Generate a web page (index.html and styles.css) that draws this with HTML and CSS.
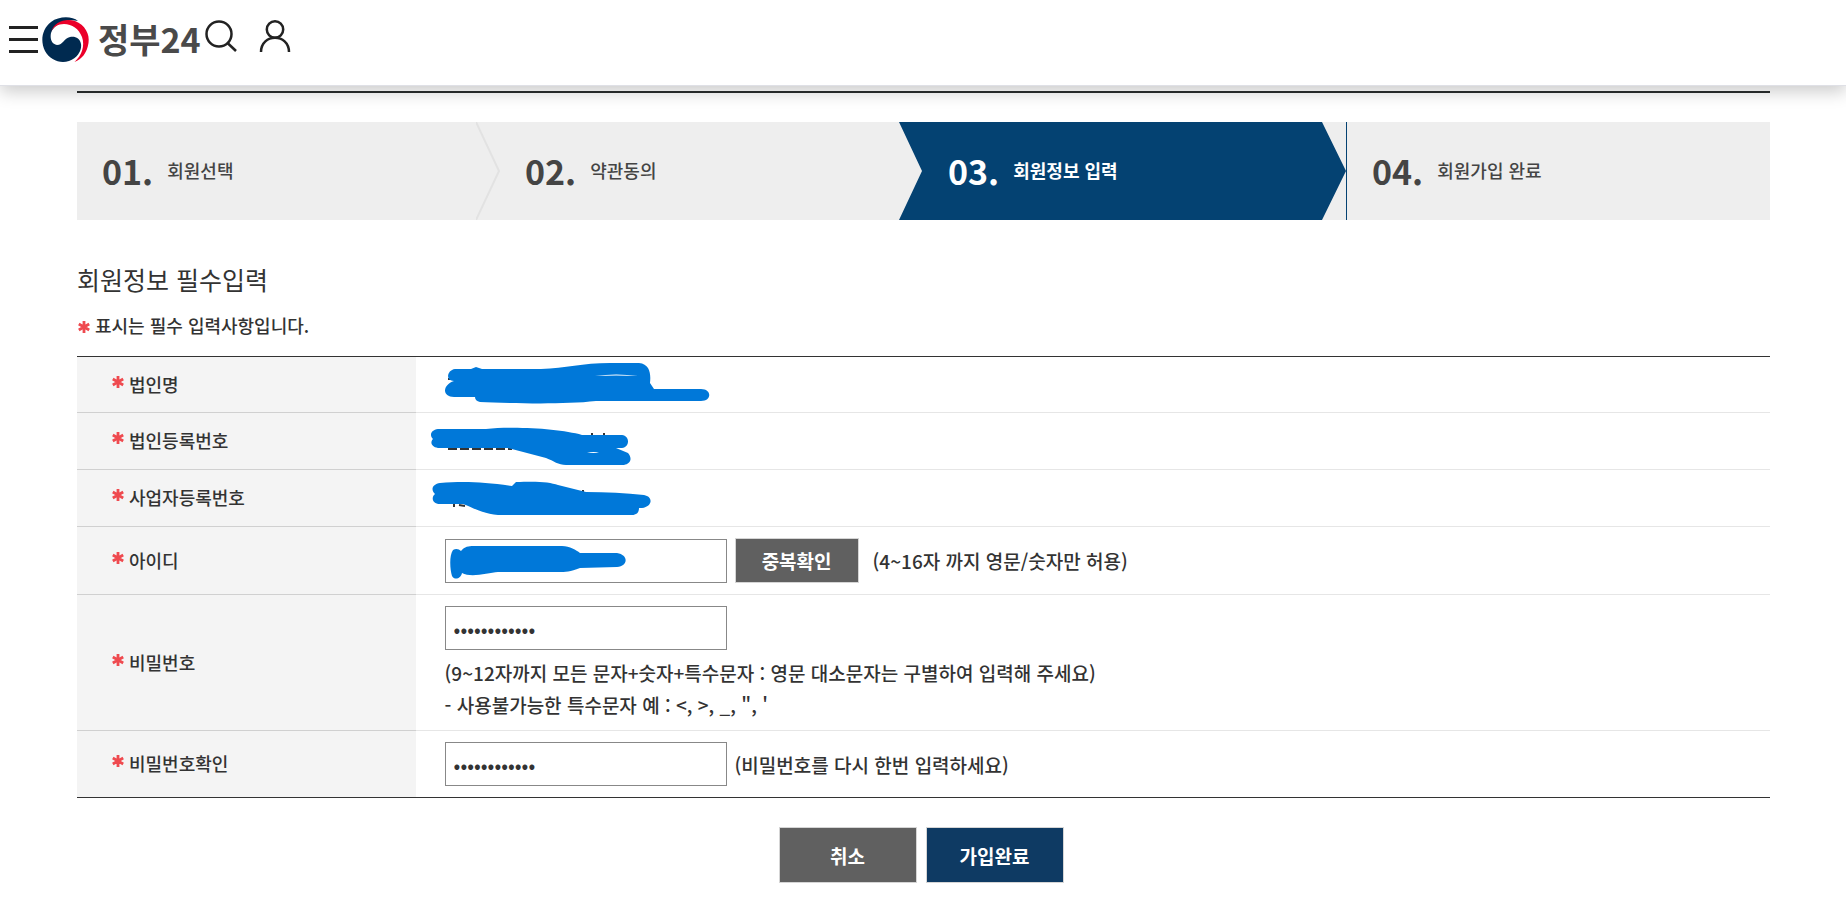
FILE: index.html
```html
<!DOCTYPE html>
<html lang="ko">
<head>
    <meta charset="UTF-8">
    <meta name="viewport" content="width=device-width, initial-scale=1.0">
    <title>회원정보 입력 | 정부24</title>
    <link rel="stylesheet" href="styles.css">
</head>
<body>
    <svg class="symbols" aria-hidden="true">
        <symbol id="star" viewBox="0 0 12 12">
            <path d="M6 0v12M0.800 3l10.400 6M11.200 3L0.800 9" fill="none" stroke="#ef4a4f" stroke-width="2.800"/>
        </symbol>
    </svg>

    <header class="header">
        <button type="button" class="icon-button" aria-label="전체메뉴">
            <svg width="29" height="28" viewBox="0 0 29 28"><path d="M0 1.5h29M0 13.5h29M0 25.5h29" stroke="#222" stroke-width="3"/></svg>
        </button>
        <a href="#" class="logo">
            <svg width="48" height="46" viewBox="0 0 48 46">
                <path d="M36 4C30-1 17-1 9 5C0 12-2 24 3 34C8 43 18 47 27 44C36 41 40 33 39 27C38 21 33 19 28 20C22 21 21 28 15 28C9 27 8 21 9 16C12 7 24 1 36 4Z" fill="#002a50"/>
                <path d="M9 15C12 5 23 1 33 4C43 8 48 17 46.500 26C45 36 40 42 32.500 45C40 38 43 29 40 20C37 12 30 7 22 7C16 7 11 10 9 15Z" fill="#eb0029"/>
            </svg>
            <span>정부24</span>
        </a>
        <button type="button" class="icon-button tool" aria-label="검색">
            <svg width="32" height="32" viewBox="0 0 32 32" fill="none" stroke="#222" stroke-width="2.500"><circle cx="14" cy="14" r="12.500"/><path d="M22.500 23L31 31"/></svg>
        </button>
        <button type="button" class="icon-button tool" aria-label="로그인">
            <svg width="32" height="32" viewBox="0 0 32 32" fill="none" stroke="#222" stroke-width="2.500"><circle cx="16" cy="9.500" r="8.200"/><path d="M2 32C2 13 30 13 30 32"/></svg>
        </button>
    </header>

    <main class="container">
        <ol class="steps">
            <li class="step">
                <strong>01.</strong><span>회원선택</span>
                <svg class="arrow" viewBox="0 0 24 98" preserveAspectRatio="none"><path d="M0 0L23 49L0 98" fill="none" stroke="#e2e2e2" stroke-width="2"/></svg>
            </li>
            <li class="step">
                <strong>02.</strong><span>약관동의</span>
                <svg class="arrow" viewBox="0 0 24 98" preserveAspectRatio="none"><path d="M0 0H24V98H0L23 49Z" fill="#044272"/></svg>
            </li>
            <li class="step on">
                <strong>03.</strong><span>회원정보 입력</span>
                <svg class="arrow" viewBox="0 0 24 98" preserveAspectRatio="none"><path d="M0 0H24V98H0L24 49Z" fill="#eee"/></svg>
            </li>
            <li class="step">
                <strong>04.</strong><span>회원가입 완료</span>
            </li>
        </ol>

        <h1>회원정보 필수입력</h1>
        <p class="notice"><svg class="star"><use href="#star"/></svg>표시는 필수 입력사항입니다.</p>

        <form>
            <table class="form-table">
                <tbody>
                    <tr>
                        <th scope="row"><svg class="star"><use href="#star"/></svg>법인명</th>
                        <td>
                            <svg class="mask" width="320" height="56" viewBox="0 0 320 56">
                                <path d="M32 22h6M176 20h3M194 19h2" stroke="#333" stroke-width="2"/>
                                <path d="M39 12H55L60 10L66 12H125C150 11 166 6 194 6H223C234 7 235 17 234 26L238 32L243 32H285C296 32 296 44 285 44H180C145 48 90 46 64 45Q59 44 59 40H38C26 40 26 28 38 24C29 24 31 13 39 12Z" fill="#0078d9"/>
                                <path d="M179 19Q200 16 222 19Q200 18 179 19" fill="#fff"/>
                            </svg>
                        </td>
                    </tr>
                    <tr>
                        <th scope="row"><svg class="star"><use href="#star"/></svg>법인등록번호</th>
                        <td>
                            <svg class="mask" width="320" height="56" viewBox="0 0 320 56">
                                <path d="M32 36h64" stroke="#333" stroke-width="2" stroke-dasharray="9 3"/>
                                <path d="M176 20v4M188 20v4" stroke="#333" stroke-width="2"/>
                                <path d="M22 16H70C100 13 145 16 166 22H206C214 23 214 34 206 35H200L212 40C217 46 214 51 208 52H150C142 52 138 48 130 45L92 35H22C15 34 14 29 17 26C13 22 15 17 22 16Z" fill="#0078d9"/>
                                <path d="M171 40Q178 38 183 40Z" fill="#fff"/>
                            </svg>
                        </td>
                    </tr>
                    <tr>
                        <th scope="row"><svg class="star"><use href="#star"/></svg>사업자등록번호</th>
                        <td>
                            <svg class="mask" width="320" height="56" viewBox="0 0 320 56">
                                <path d="M38 32v5M43 35l6 1M167 20v4" stroke="#333" stroke-width="2"/>
                                <path d="M24 13C48 11 68 12 96 16L100 12C122 11 134 12 142 15L170 22C190 22 210 23 228 25C238 27 236 37 226 38H223C223 43 220 45 216 45H90C70 46 58 38 47 34H24C16 34 15 27 19 24C14 19 17 14 24 13Z" fill="#0078d9"/>
                            </svg>
                        </td>
                    </tr>
                    <tr>
                        <th scope="row"><svg class="star"><use href="#star"/></svg><label for="user-id">아이디</label></th>
                        <td>
                            <div class="field">
                                <input type="text" id="user-id">
                                <button type="button" class="btn-check">중복확인</button>
                                <span>(4~16자 까지 영문/숫자만 허용)</span>
                            </div>
                            <svg class="mask" width="320" height="67" viewBox="0 0 320 67">
                                <path d="M37 23C40 21 43 22 45 24C50 18 55 19 63 19H146C154 19 160 23 164 26H201C213 28 212 39 201 40L164 41C154 45 150 45 142 45H82C72 46 55 51 46 46C45 51 39 54 36 49C34 42 33 29 37 23Z" fill="#0078d9"/>
                            </svg>
                        </td>
                    </tr>
                    <tr>
                        <th scope="row"><svg class="star"><use href="#star"/></svg><label for="user-pw">비밀번호</label></th>
                        <td>
                            <div class="field">
                                <input type="password" id="user-pw" value="abcdefgh1234">
                            </div>
                            <p class="guide">(9~12자까지 모든 문자+숫자+특수문자 : 영문 대소문자는 구별하여 입력해 주세요)<br>- 사용불가능한 특수문자 예 : &lt;, &gt;, _, ", '</p>
                        </td>
                    </tr>
                    <tr>
                        <th scope="row"><svg class="star"><use href="#star"/></svg><label for="user-pw2">비밀번호확인</label></th>
                        <td>
                            <div class="field">
                                <input type="password" id="user-pw2" value="abcdefgh1234">
                                <span>(비밀번호를 다시 한번 입력하세요)</span>
                            </div>
                        </td>
                    </tr>
                </tbody>
            </table>
            <div class="buttons">
                <button type="button" class="btn-cancel">취소</button>
                <button type="submit" class="btn-submit">가입완료</button>
            </div>
        </form>
    </main>
</body>
</html>
```
FILE: styles.css
```css
* {
    box-sizing: border-box;
}
body {
    margin: 0;
    font-family: "Noto Sans CJK KR", "Noto Sans", sans-serif;
    font-size: 18px;
    font-weight: 500;
    color: #333;
    background: #fff;
}
.symbols {
    display: none;
}
button, input {
    font-family: inherit;
    color: inherit;
}
button {
    cursor: pointer;
}

/* header */
.header {
    position: relative;
    display: flex;
    align-items: center;
    height: 86px;
    padding: 0 9px 5px;
    border-bottom: 1px solid #dfe0e6;
    box-shadow: 0 6px 16px rgba(0, 0, 0, 0.2);
}
.icon-button {
    display: flex;
    padding: 0;
    border: none;
    background: none;
}
.icon-button.tool {
    margin: 0 22px 8px 0;
}
.logo {
    display: flex;
    align-items: center;
    gap: 8px;
    margin: 0 4px;
    font-size: 34px;
    font-weight: 700;
    line-height: 46px;
    color: #4a4a4a;
    text-decoration: none;
}
.logo span {
    padding-bottom: 2px;
}

.container {
    margin: 5px 76px 0 77px;
    border-top: 2px solid #2b2e2e;
}

/* steps */
.steps {
    display: flex;
    margin: 29px 0 0;
    padding: 0;
    list-style: none;
}
.step {
    position: relative;
    flex: 1;
    display: flex;
    align-items: center;
    gap: 14px;
    height: 98px;
    padding: 0 0 2px 25px;
    background: #eee;
    color: #444;
}
.step strong {
    font-size: 34px;
    font-weight: 700;
}
.step.on {
    background: #044272;
    border-right: 1px solid #044272;
    color: #fff;
    font-weight: 700;
}
.arrow {
    position: absolute;
    top: 0;
    right: 0;
    width: 24px;
    height: 100%;
}

h1 {
    margin: 41px 0 0;
    font-size: 25px;
    font-weight: 400;
    line-height: 36px;
}
.notice {
    margin: 13px 0 16px;
    line-height: 30px;
}
.star {
    width: 12px;
    height: 12px;
    margin: 0 5px 0 1px;
}

/* form table */
.form-table {
    width: 100%;
    border-collapse: separate;
    border-spacing: 0;
}
.form-table th {
    width: 20%;
    padding: 0 0 2px 34px;
    background: #f4f4f4;
    border-bottom: 1px solid #d0d0d0;
    font-weight: 500;
    text-align: left;
}
.form-table th .star {
    vertical-align: 4px;
}
.form-table td {
    position: relative;
    height: 57px;
    padding: 11px 0 11px 29px;
    border-bottom: 1px solid #e6e6e6;
}
.form-table tr:first-child th,
.form-table tr:first-child td {
    border-top: 1px solid #333;
}
.form-table tr:last-child th,
.form-table tr:last-child td {
    border-bottom-color: #333;
}
.field {
    display: flex;
    align-items: center;
    font-size: 19px;
}
.field input {
    width: 282px;
    height: 44px;
    margin-right: 8px;
    padding: 0 8px;
    border: 1px solid #888;
    font-size: 20px;
}
.guide {
    margin: 7px 0 -2px;
    font-size: 19px;
    line-height: 32px;
}
.mask {
    position: absolute;
    top: 0;
    left: 0;
}

/* buttons */
.btn-check, .btn-cancel, .btn-submit {
    padding: 0;
    border: 1px solid #d5d5d5;
    background: #606060;
    color: #fff;
    font-size: 19px;
    font-weight: 700;
}
.btn-check {
    width: 124px;
    height: 45px;
    margin-right: 14px;
}
.buttons {
    display: flex;
    justify-content: center;
    gap: 9px;
    margin-top: 29px;
    padding-right: 5px;
}
.btn-cancel, .btn-submit {
    width: 138px;
    height: 56px;
}
.btn-submit {
    background: #0e3a63;
}
```
